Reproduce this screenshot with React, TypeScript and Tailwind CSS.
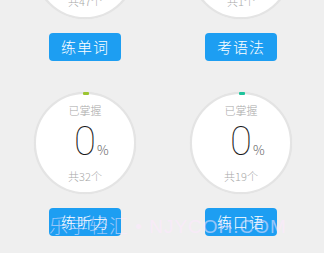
import React from "react";

type Item = { label: string; total: number; dot: string };

const rows: Item[][] = [
  [
    { label: "练单词", total: 47, dot: "#9cc532" },
    { label: "考语法", total: 1, dot: "#1fc39c" },
  ],
  [
    { label: "练听力", total: 32, dot: "#9cc532" },
    { label: "练口语", total: 19, dot: "#1fc39c" },
  ],
];

function Cell({ item }: { item: Item }) {
  return (
    <div className="flex flex-col items-center">
      <div className="relative w-[102px] h-[102px] rounded-full bg-white border-2 border-[#e4e4e4] box-border flex flex-col items-center pt-[9px] shadow-[0_0_1px_rgba(0,0,0,0.08)]">
        <div
          className="absolute top-[-2px] left-[50%] ml-[-2px] w-[6px] h-[3px] rounded-[1px]"
          style={{ backgroundColor: item.dot }}
        />
        <div className="text-[11px] leading-[14px] text-[#a8a8a8] font-light">已掌握</div>
        <div className="relative mt-[5px]">
          <span className="block font-['Roboto'] font-thin text-[40px] leading-[40px] text-[#1a1a1a]">0</span>
          <span className="absolute left-full bottom-[5px] ml-[1px] text-[13px] leading-[14px] text-[#666] font-light">%</span>
        </div>
        <div className="mt-[7px] text-[11px] leading-[14px] text-[#a8a8a8] font-light">共{item.total}个</div>
      </div>
      <button className="mt-[14px] w-[72px] h-[28px] rounded-[4px] bg-[#1d9ef2] text-white text-[15px] leading-[28px] tracking-[1px] font-light">
        {item.label}
      </button>
    </div>
  );
}

export default function App() {
  return (
    <div
      className="relative w-[324px] h-[253px] overflow-hidden bg-[#efefef]"
      style={{ fontFamily: '"Noto Sans CJK SC", "Liberation Sans", sans-serif' }}
    >
      <div className="-mt-[83px] flex flex-col gap-[31px] pl-[7px] pr-[5px]">
        {rows.map((row, i) => (
          <div key={i} className="grid grid-cols-2">
            {row.map((item) => (
              <Cell key={item.label} item={item} />
            ))}
          </div>
        ))}
      </div>
      <div className="absolute left-[49px] top-[215px] text-[19px] leading-[24px] tracking-[1px] font-light text-[rgba(255,232,255,0.55)] whitespace-nowrap font-['Liberation_Sans','Noto_Sans_CJK_SC',sans-serif]">
        乐学轻汇 • NJYCOH.COM
      </div>
    </div>
  );
}
